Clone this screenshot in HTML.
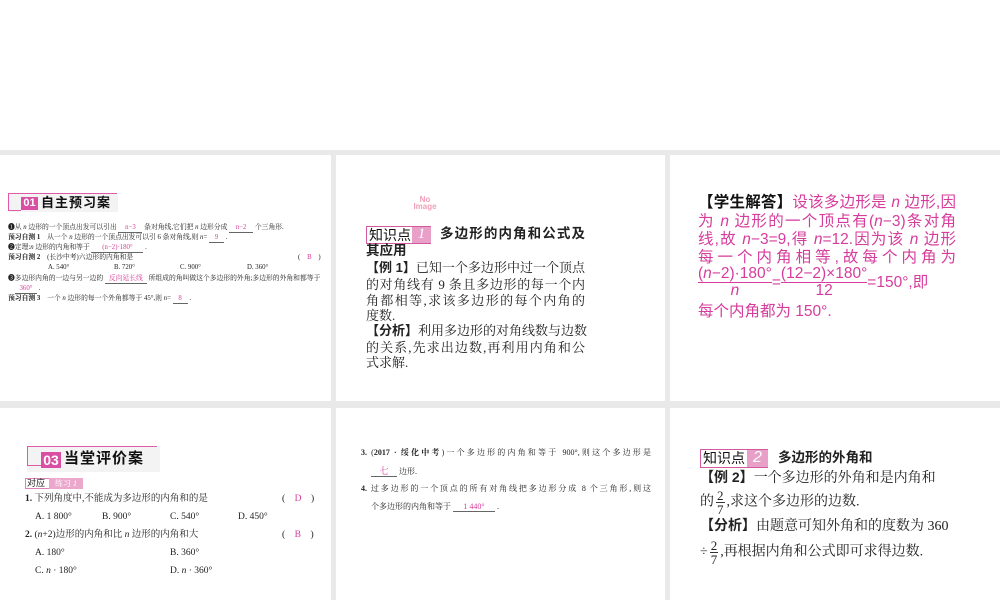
<!DOCTYPE html>
<html><head><meta charset="utf-8"><style>
*{margin:0;padding:0;box-sizing:border-box}
body{width:1000px;height:600px;position:relative;background:#fff;overflow:hidden;font-family:"Liberation Serif","Noto Serif CJK SC",serif;color:#222}
.bg{position:absolute;left:0;top:150px;width:1000px;height:450px;background:#e9e9e9}
.card{position:absolute;background:#fff}
.l{position:absolute;white-space:nowrap;line-height:1}
.j{position:absolute;white-space:nowrap;line-height:1;text-align:justify;text-align-last:justify}
.p{color:#d63c9c}
.s{font-family:"Liberation Sans","Noto Sans CJK SC",sans-serif}
.u{display:inline-block;border-bottom:0.6px solid #666;text-align:center;color:#d63c9c}
.b{font-weight:bold}
.frac{display:inline-block;vertical-align:middle;text-align:center}
.frac span{display:block}
.frac .n{border-bottom:1px solid #d63c9c}
</style></head><body>
<div class="bg"></div>
<div class="card" style="left:0;top:155px;width:331px;height:246px"></div>
<div class="card" style="left:336px;top:155px;width:329px;height:246px"></div>
<div class="card" style="left:670px;top:155px;width:330px;height:246px"></div>
<div class="card" style="left:0;top:408px;width:331px;height:192px"></div>
<div class="card" style="left:336px;top:408px;width:329px;height:192px"></div>
<div class="card" style="left:670px;top:408px;width:330px;height:192px"></div>

<!-- card 1 -->
<div style="position:absolute;left:8px;top:194px;width:110px;height:18px;background:#f3f3f3"></div>
<div style="position:absolute;left:8px;top:193px;width:109px;height:1px;background:#e05aa8"></div>
<div style="position:absolute;left:8px;top:193px;width:1px;height:18px;background:#e05aa8"></div>
<div style="position:absolute;left:8px;top:210px;width:13px;height:1px;background:#e05aa8"></div>
<div class="l s b" style="left:21px;top:197px;width:17px;height:13px;background:#d94fa3;color:#fff;font-size:11px;text-align:center;line-height:13px">01</div>
<div class="l s b" style="left:41px;top:196px;font-size:13px;color:#111;letter-spacing:1px">自主预习案</div>
<div style="font-size:6.8px;color:#222">
<div class="l" style="left:8px;top:225px">❶从 <i>n</i> 边形的一个顶点出发可以引出 <span class="u" style="width:24px">n−3</span> 条对角线,它们把 <i>n</i> 边形分成 <span class="u" style="width:24px">n−2</span> 个三角形.</div>
<div class="l" style="left:8px;top:235px"><b>预习自测 1</b>　从一个 <i>n</i> 边形的一个顶点出发可以引 6 条对角线,则 <i>n</i>= <span class="u" style="width:15px">9</span> .</div>
<div class="l" style="left:8px;top:245px">❷定理:<i>n</i> 边形的内角和等于 <span class="u" style="width:52px">(n−2)·180°</span> .</div>
<div class="l" style="left:8px;top:255px"><b>预习自测 2</b>　(长沙中考)六边形的内角和是</div>
<div class="l" style="left:298px;top:255px">(　<span class="p">B</span>　)</div>
<div class="l" style="left:48px;top:265px">A. 540°</div>
<div class="l" style="left:114px;top:265px">B. 720°</div>
<div class="l" style="left:180px;top:265px">C. 900°</div>
<div class="l" style="left:247px;top:265px">D. 360°</div>
<div class="l" style="left:8px;top:276px">❸多边形内角的一边与另一边的 <span class="u" style="width:42px">反向延长线</span> 所组成的角叫做这个多边形的外角;多边形的外角和都等于</div>
<div class="l" style="left:15px;top:286px"><span class="u" style="width:22px">360°</span> .</div>
<div class="l" style="left:8px;top:296px"><b>预习自测 3</b>　一个 <i>n</i> 边形的每一个外角都等于 45°,则 <i>n</i>= <span class="u" style="width:15px">8</span> .</div>
</div>

<!-- card 2 -->
<div class="l s b" style="left:390px;top:196px;font-size:8px;color:#f0a0b8;line-height:7px;text-align:center;width:70px">No<br>Image</div>
<div class="l" style="left:366px;top:226px;width:65px;height:18px;border:1px solid #d45aa0;background:#fff"></div>
<div class="l s" style="left:369px;top:228px;font-size:14px;color:#111">知识点</div>
<div class="l" style="left:412px;top:227px;width:19px;height:16px;background:#e8a0c8;color:#fff;font-size:15px;font-style:italic;text-align:center">1</div>
<div class="j s b" style="left:440px;top:227px;width:145px;font-size:13.5px">多边形的内角和公式及</div>
<div class="l s b" style="left:366px;top:244px;font-size:13.5px">其应用</div>
<div style="font-size:13px">
<div class="j" style="left:366px;top:261px;width:219px"><b class="s">【例 1】</b>已知一个多边形中过一个顶点</div>
<div class="j" style="left:366px;top:278px;width:219px">的对角线有 9 条且多边形的每一个内</div>
<div class="j" style="left:366px;top:294px;width:219px">角都相等,求该多边形的每个内角的</div>
<div class="l" style="left:366px;top:309px">度数.</div>
<div class="j" style="left:366px;top:324px;width:219px"><b class="s">【分析】</b>利用多边形的对角线数与边数</div>
<div class="j" style="left:366px;top:341px;width:219px">的关系,先求出边数,再利用内角和公</div>
<div class="l" style="left:366px;top:356px">式求解.</div>
</div>

<!-- card 3 -->
<div class="s p" style="font-size:15.5px">
<div class="j" style="left:698px;top:195px;width:258px"><b style="color:#111">【学生解答】</b>设该多边形是 <i>n</i> 边形,因</div>
<div class="j" style="left:698px;top:214px;width:258px">为 <i>n</i> 边形的一个顶点有(<i>n</i>−3)条对角</div>
<div class="j" style="left:698px;top:232px;width:258px">线,故 <i>n</i>−3=9,得 <i>n</i>=12.因为该 <i>n</i> 边形</div>
<div class="j" style="left:698px;top:250px;width:258px">每一个内角相等,故每个内角为</div>
<div class="l" style="left:698px;top:266px;line-height:1.05">
<span class="frac"><span class="n">(<i>n</i>−2)·180°</span><span><i>n</i></span></span>=<span class="frac"><span class="n">(12−2)×180°</span><span>12</span></span>=150°,即</div>
<div class="l" style="left:698px;top:304px">每个内角都为 150°.</div>
</div>

<!-- row 2 card 1 -->
<div style="position:absolute;left:27px;top:447px;width:133px;height:25px;background:#f3f3f3"></div>
<div style="position:absolute;left:27px;top:446px;width:130px;height:1px;background:#e05aa8"></div>
<div style="position:absolute;left:27px;top:446px;width:1px;height:20px;background:#e05aa8"></div>
<div style="position:absolute;left:27px;top:465px;width:14px;height:1px;background:#e05aa8"></div>
<div class="l s b" style="left:41px;top:452px;width:20px;height:16px;background:#d94fa3;color:#fff;font-size:14px;text-align:center;line-height:16px">03</div>
<div class="l s b" style="left:64px;top:451px;font-size:15px;color:#111;letter-spacing:1px">当堂评价案</div>
<div class="l s" style="left:25px;top:478px;width:58px;height:11px;border:1px solid #e080b8"></div>
<div class="l s" style="left:27px;top:479px;font-size:9px">对应</div>
<div class="l" style="left:49px;top:478px;width:34px;height:11px;background:#eca8cc;color:#fff;font-size:8px;text-align:center;line-height:11px">练习 <i>1</i></div>
<div style="font-size:9.5px">
<div class="l" style="left:25px;top:495px"><b>1.</b> 下列角度中,不能成为多边形的内角和的是</div>
<div class="l" style="left:282px;top:495px">(　<span class="p">D</span>　)</div>
<div class="l" style="left:35px;top:513px">A. 1 800°</div>
<div class="l" style="left:102px;top:513px">B. 900°</div>
<div class="l" style="left:170px;top:513px">C. 540°</div>
<div class="l" style="left:238px;top:513px">D. 450°</div>
<div class="l" style="left:25px;top:531px"><b>2.</b> (<i>n</i>+2)边形的内角和比 <i>n</i> 边形的内角和大</div>
<div class="l" style="left:282px;top:531px">(　<span class="p">B</span>　)</div>
<div class="l" style="left:35px;top:549px">A. 180°</div>
<div class="l" style="left:170px;top:549px">B. 360°</div>
<div class="l" style="left:35px;top:567px">C. <i>n</i> · 180°</div>
<div class="l" style="left:170px;top:567px">D. <i>n</i> · 360°</div>
</div>

<!-- row 2 card 2 -->
<div style="font-size:8px">
<div class="j" style="left:361px;top:449px;width:290px"><b>3.</b> (<b>2017 · 绥化中考</b>)一个多边形的内角和等于 900°,则这个多边形是</div>
<div class="l" style="left:371px;top:467px"><span class="u" style="width:26px;font-size:9px">七</span> 边形.</div>
<div class="j" style="left:361px;top:485px;width:290px"><b>4.</b> 过多边形的一个顶点的所有对角线把多边形分成 8 个三角形,则这</div>
<div class="l" style="left:371px;top:503px">个多边形的内角和等于 <span class="u" style="width:42px">1 440°</span> .</div>
</div>

<!-- row 2 card 3 -->
<div class="l" style="left:700px;top:449px;width:68px;height:19px;border:1px solid #d45aa0"></div>
<div class="l s" style="left:703px;top:451px;font-size:14px;color:#111">知识点</div>
<div class="l s" style="left:747px;top:450px;width:21px;height:17px;background:#e8a0c8;color:#fff;font-size:16px;font-style:italic;text-align:center">2</div>
<div class="l s b" style="left:778px;top:451px;font-size:13.5px">多边形的外角和</div>
<div style="font-size:14px">
<div class="j" style="left:700px;top:470px;width:233px"><b class="s">【例 2】</b>一个多边形的外角和是内角和</div>
<div class="l" style="left:700px;top:489px;line-height:1.0">的<span class="frac" style="font-size:13px;margin:0 2px"><span class="n" style="border-color:#333;padding:0 1px">2</span><span>7</span></span>,求这个多边形的边数.</div>
<div class="j" style="left:700px;top:518px;width:233px"><b class="s">【分析】</b>由题意可知外角和的度数为 360</div>
<div class="l" style="left:700px;top:539px;line-height:1.0">÷<span class="frac" style="font-size:13px;margin:0 2px"><span class="n" style="border-color:#333;padding:0 1px">2</span><span>7</span></span>,再根据内角和公式即可求得边数.</div>
</div>
</body></html>
